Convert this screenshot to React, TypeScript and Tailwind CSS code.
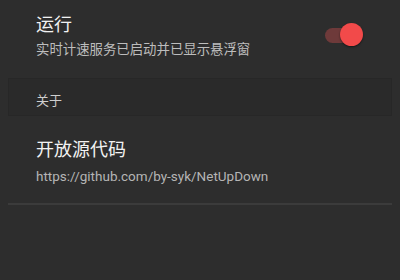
import React from "react";

export default function App() {
  return (
    <div
      className="w-[400px] h-[280px] bg-[#2d2d2d] overflow-hidden"
      style={{ fontFamily: "Roboto, 'Noto Sans CJK SC', sans-serif" }}
    >
      <div className="flex justify-between pl-[36px] pr-[37px] pt-[12px] h-[68px] items-start">
        <div className="flex flex-col">
          <div className="text-[18px] leading-[25px] text-[#f2f2f2]">运行</div>
          <div className="text-[13.4px] leading-[20px] mt-[3px] text-[#bdbdbd]">实时计速服务已启动并已显示悬浮窗</div>
        </div>
        <div className="relative w-[40px] h-[24px] mt-[11px]">
          <div className="absolute left-[2px] top-[5px] w-[34px] h-[15px] rounded-full bg-[#6e3a3a]" />
          <div className="absolute right-[0px] top-[0px] w-[23px] h-[23px] rounded-full bg-[#f24a4a] shadow-[0_1px_2px_rgba(0,0,0,0.5)]" />
        </div>
      </div>
      <div className="mx-[8px] mt-[10px] h-[38px] bg-[#2a2a2a] border border-[#272727] flex items-start pt-[12px] pl-[27px]">
        <span className="text-[13px] leading-[20px] text-[#cfcfcf]">关于</span>
      </div>
      <div className="pl-[36px] pt-[21px]">
        <div className="text-[18px] leading-[25px] text-[#f2f2f2]">开放源代码</div>
        <div className="text-[13.5px] leading-[20px] mt-[4px] text-[#b5b5b5]">https://github.com/by-syk/NetUpDown</div>
      </div>
      <div className="mx-[8px] mt-[17px] h-[2px] bg-[#3b3b3b]" />
    </div>
  );
}
